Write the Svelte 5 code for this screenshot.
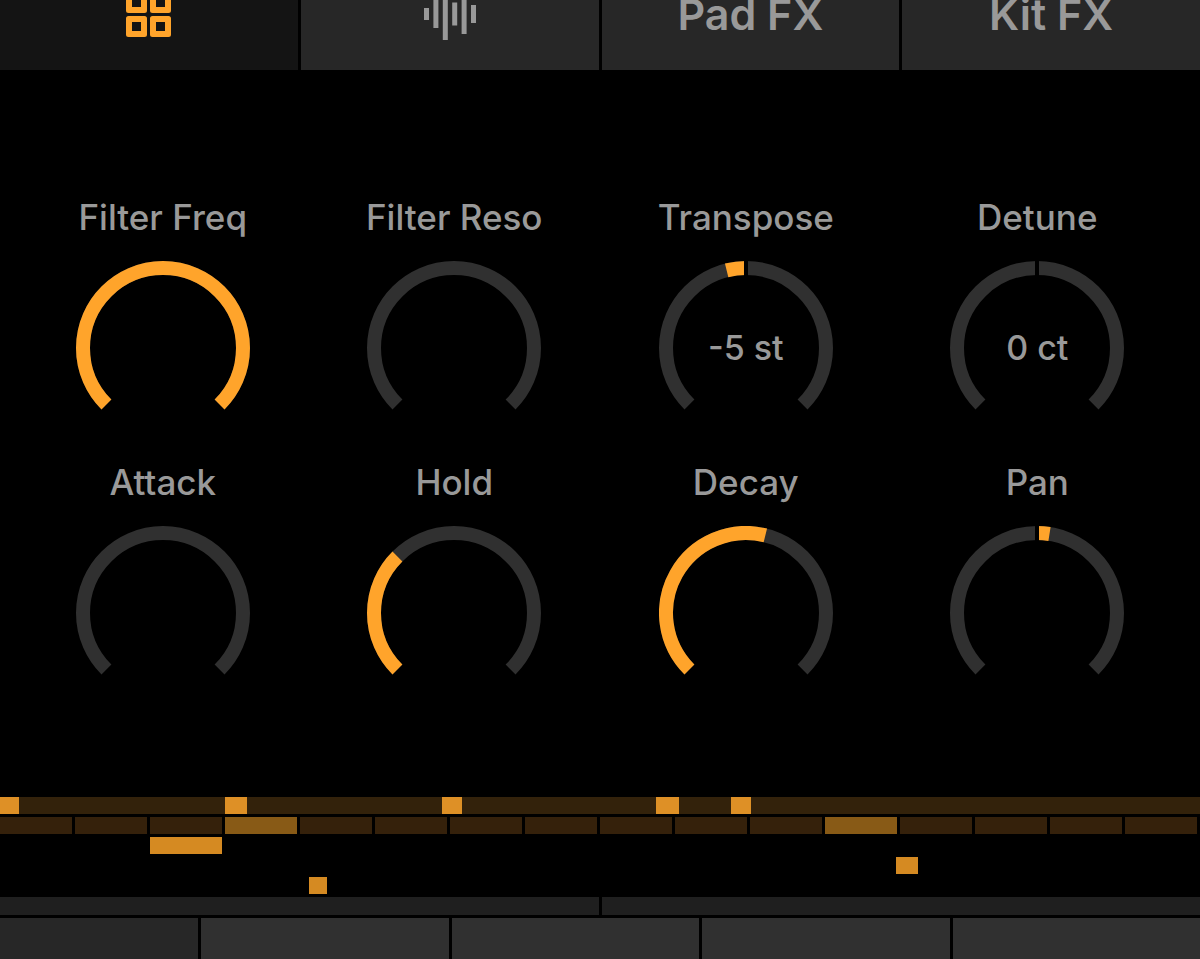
<script>
let knobs = [
  {name: "Filter Freq", value: 270, min: 0, max: 270},
  {name: "Filter Reso", value: 0, min: 0, max: 270},
  {name: "Transpose", value: -14, min: -135, max: 135, text: "-5 st"},
  {name: "Detune", value: 0, min: -135, max: 135, text: "0 ct"},
  {name: "Attack", value: 0, min: 0, max: 270},
  {name: "Hold", value: 90, min: 0, max: 270},
  {name: "Decay", value: 149, min: 0, max: 270},
  {name: "Pan", value: 9, min: -135, max: 135}
]

// start and length, 1200 ticks to the clip
const lanes = [
  {kind: "held", notes: [[0, 19], [225, 22], [442, 20], [656, 23], [731, 20]]},
  {kind: "steps", on: [3, 11]},
  {kind: "free", notes: [[150, 72]]},
  {kind: "free", notes: [[896, 22]]},
  {kind: "free", notes: [[309, 18]]}
]
const steps = Array.from({length: 16}, (_, i) => i)

let tab = 0
let pad = 0

// angles are in degrees from twelve o'clock
const point = (deg) => {
  const a = deg * Math.PI / 180
  return `${87 + 80 * Math.sin(a)} ${87 - 80 * Math.cos(a)}`
}
const arc = (from, to) => `M${point(from)} A80 80 0 ${to - from > 180 ? 1 : 0} 1 ${point(to)}`

const fill = (k) => {
  if (k.min < 0) return arc(Math.min(k.value, 0), Math.max(k.value, 0))
  return arc(-135, k.value - 135)
}
</script>

<div class="app">
  <nav class="tabs">
    <button class:active={tab == 0} aria-label="Pads" on:click={() => tab = 0}>
      <svg width="45" height="45" viewBox="0 0 45 45" fill="currentColor" fill-rule="evenodd">
        {#each [0, 24] as y}
          {#each [0, 24] as x}
            <path transform="translate({x} {y})" d="M2.5 0H18.5A2.5 2.5 0 0 1 21 2.5V18.5A2.5 2.5 0 0 1 18.5 21H2.5A2.5 2.5 0 0 1 0 18.5V2.5A2.5 2.5 0 0 1 2.5 0ZM6 6V15H15V6Z" />
          {/each}
        {/each}
      </svg>
    </button>
    <button class:active={tab == 1} aria-label="Sample" on:click={() => tab = 1}>
      <svg width="52" height="52" viewBox="0 0 52 52" fill="currentColor">
        <rect x="0" y="20" width="5" height="12" />
        <rect x="9.4" y="12" width="5" height="28" />
        <rect x="18.8" y="0" width="5" height="52" />
        <rect x="28.2" y="14.5" width="5" height="23" />
        <rect x="37.6" y="6" width="5" height="40" />
        <rect x="47" y="17" width="5" height="18" />
      </svg>
    </button>
    <button class:active={tab == 2} on:click={() => tab = 2}>Pad FX</button>
    <button class:active={tab == 3} on:click={() => tab = 3}>Kit FX</button>
  </nav>

  <main class="knobs">
    {#each knobs as k}
      <label class="knob">
        <span class="name">{k.name}</span>
        <span class="dial">
          <svg viewBox="0 0 174 174" fill="none" stroke-width="14">
            <path class="track" d={arc(-135, 135)} />
            {#if k.value != 0}
              <path class="fill" d={fill(k)} />
            {/if}
            {#if k.min < 0}
              <path class="notch" d="M87 0V15" />
            {/if}
          </svg>
          {#if k.text}
            <span class="value">{k.text}</span>
          {/if}
          <input type="range" min={k.min} max={k.max} bind:value={k.value} />
        </span>
      </label>
    {/each}
  </main>

  <section class="clip">
    {#each lanes as lane}
      <div class="lane {lane.kind}">
        {#if lane.kind == "steps"}
          {#each steps as s}
            <span class="step" class:on={lane.on.includes(s)}></span>
          {/each}
        {:else}
          {#each lane.notes as [start, length]}
            <span class="note" style:left="{start / 12}%" style:width="{length / 12}%"></span>
          {/each}
        {/if}
      </div>
    {/each}
  </section>

  <div class="bars">
    <span></span>
    <span></span>
  </div>

  <footer class="pads">
    {#each [0, 1, 2, 3, 4] as p}
      <button class:active={pad == p} aria-label="Slot {p + 1}" on:click={() => pad = p}></button>
    {/each}
  </footer>
</div>

<style>
:global(body) {
  background: #000;
}
.app {
  display: flex;
  flex-direction: column;
  min-height: 100vh;
  overflow: hidden;
  background: #000;
  color: #999;
  font-family: Inter, "Liberation Sans", sans-serif;
}
button {
  margin: 0;
  padding: 0;
  border: 0;
  border-radius: 0;
  color: inherit;
  font: inherit;
  cursor: pointer;
}
svg {
  display: block;
}
/* the tab bar is scrolled partly off the top */
.tabs {
  display: grid;
  grid-template-columns: repeat(4, 1fr);
  gap: 3px;
  height: 112px;
  margin-top: -42px;
}
.tabs button {
  display: flex;
  align-items: center;
  justify-content: center;
  background: #272727;
  font-size: 43px;
  font-weight: 600;
}
.tabs button.active {
  background: #141414;
  color: #ffa42b;
}
.knobs {
  display: grid;
  grid-template-columns: repeat(4, 1fr);
  row-gap: 25px;
  padding: 125px 17px 97px;
}
.knob {
  display: flex;
  flex-direction: column;
  align-items: center;
  gap: 22px;
  font-size: 35px;
  font-weight: 500;
  line-height: 44px;
}
.name {
  white-space: nowrap;
}
.dial {
  display: grid;
  place-items: center;
  position: relative;
  width: 174px;
  height: 174px;
}
.dial svg, .value {
  grid-area: 1 / 1;
}
.dial svg {
  width: 100%;
}
.value {
  font-size: 34px;
}
.dial input {
  position: absolute;
  inset: 0;
  width: 100%;
  height: 100%;
  margin: 0;
  opacity: 0;
  cursor: pointer;
}
.track {
  stroke: #303030;
}
.fill {
  stroke: #ffa42b;
}
.notch {
  stroke: #000;
  stroke-width: 4px;
}
.clip {
  display: flex;
  flex-direction: column;
  gap: 3px;
}
.lane {
  position: relative;
  height: 17px;
}
.held {
  background: #33220b;
}
.steps {
  display: grid;
  grid-template-columns: repeat(16, 1fr);
}
.step {
  margin-right: 3px;
  background: #35210b;
}
.step.on {
  background: #885a16;
}
.note {
  position: absolute;
  top: 0;
  bottom: 0;
  background: #d58a22;
}
.held .note {
  background: #de9026;
}
.bars {
  display: grid;
  grid-template-columns: 1fr 1fr;
  gap: 3px;
  height: 18px;
  margin: 3px 0;
}
.bars span {
  background: #1f1f1f;
}
.pads {
  display: grid;
  flex: 1;
  grid-template-columns: 4fr repeat(4, 5fr);
  gap: 3px;
  min-height: 40px;
}
.pads button {
  background: #303030;
}
.pads button.active {
  background: #272727;
}
</style>
